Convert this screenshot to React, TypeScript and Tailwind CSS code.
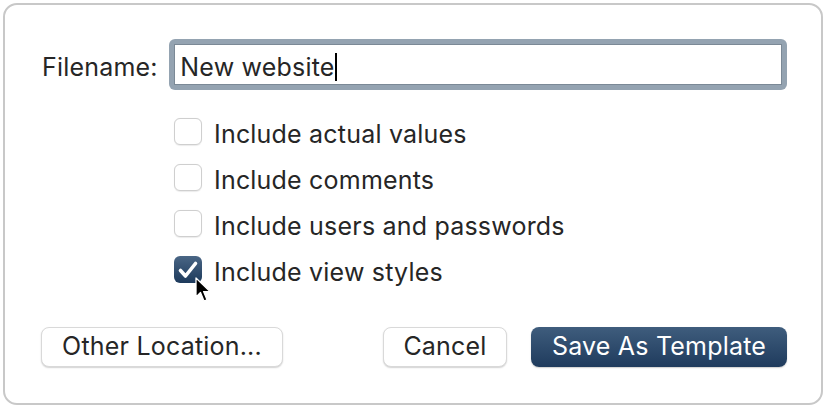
import React from 'react'

const font = { fontFamily: 'Inter, "Noto Sans", sans-serif' }

function Checkbox({ checked }: { checked?: boolean }) {
  if (checked) {
    return (
      <div className="w-[28px] h-[27px] rounded-[6px] bg-gradient-to-b from-[#4a6685] to-[#1d3a5c] flex items-center justify-center shrink-0">
        <svg width="22" height="20" viewBox="0 0 22 20" fill="none">
          <path d="M3.5 10.5 L8.5 16 L18.5 3.5" stroke="white" strokeWidth="3.6" strokeLinecap="round" strokeLinejoin="round" />
        </svg>
      </div>
    )
  }
  return <div className="w-[28px] h-[27px] rounded-[6px] bg-white border border-[#cfcfcf] shadow-[0_0.5px_1px_rgba(0,0,0,0.08)] shrink-0" />
}

const options = [
  { label: 'Include actual values', checked: false },
  { label: 'Include comments', checked: false },
  { label: 'Include users and passwords', checked: false },
  { label: 'Include view styles', checked: true },
]

export default function App() {
  return (
    <div className="w-[827px] h-[411px] bg-white p-[3px] text-[#262626] tracking-[0.2px]" style={font}>
      <div className="relative w-[820px] h-[402px] border-2 border-[#c8c8c8] rounded-[14px] flex flex-col pl-[37px] pr-[34px] pt-[34px] pb-[36px]">
        {/* filename row */}
        <div className="flex items-center">
          <span className="w-[128px] text-[25px] leading-none translate-y-[3px]">Filename:</span>
          <div className="w-[621px] h-[51px] rounded-[6px] bg-[#94a3b1] p-[5px]">
            <div className="h-full bg-white border border-[#7b8996] flex items-center pl-[5px] text-[25px] leading-none">
              <span className="translate-y-[3px]">New website</span>
              <span className="w-[2px] h-[28px] bg-black translate-y-[2px]" />
            </div>
          </div>
        </div>

        {/* options */}
        <div className="ml-[132px] mt-[28px] flex flex-col gap-[19px]">
          {options.map((o) => (
            <div key={o.label} className="flex items-center gap-[12px] h-[27px]">
              <Checkbox checked={o.checked} />
              <span className="text-[25px] leading-none translate-y-[3px]">{o.label}</span>
            </div>
          ))}
        </div>

        {/* buttons */}
        <div className="mt-auto flex items-center">
          <button type="button" className="-ml-[1px] w-[242px] h-[40px] rounded-[8px] bg-white border border-[#d9d9d9] shadow-[0_1px_1.5px_rgba(0,0,0,0.18)] text-[25px]">
            Other Location...
          </button>
          <div className="flex-1" />
          <button type="button" className="w-[124px] h-[40px] rounded-[8px] bg-white border border-[#d9d9d9] shadow-[0_1px_1.5px_rgba(0,0,0,0.18)] text-[25px]">
            Cancel
          </button>
          <button type="button" className="ml-[24px] w-[256px] h-[40px] rounded-[8px] bg-gradient-to-b from-[#3f5d7d] to-[#1f3b5d] text-white text-[25px] shadow-[0_1px_1.5px_rgba(0,0,0,0.2)]">
            Save As Template
          </button>
        </div>

        {/* mouse pointer */}
        <svg className="absolute left-[190px] top-[272px]" width="18" height="27" viewBox="0 0 18 27">
          <path d="M1 1 L1 20 L5.5 15.5 L9 24 L12 22.8 L8.6 14.6 L15 14.6 Z" fill="black" stroke="white" strokeWidth="1.3" strokeLinejoin="round" />
        </svg>
      </div>
    </div>
  )
}
